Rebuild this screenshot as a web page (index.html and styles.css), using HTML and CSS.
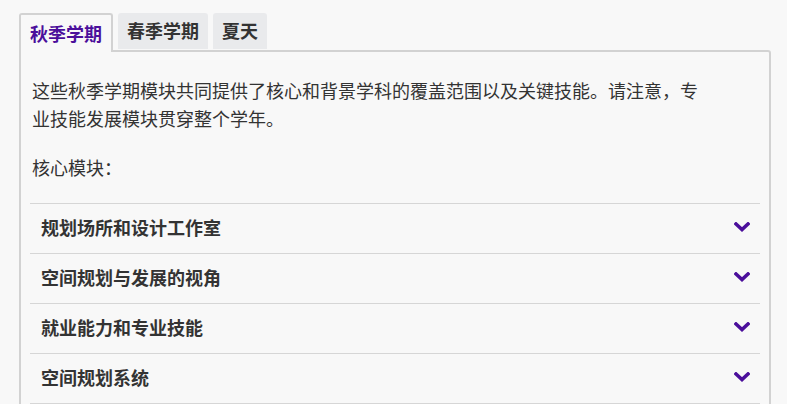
FILE: index.html
```html
<!DOCTYPE html>
<html lang="zh-CN">
<head>
  <meta charset="UTF-8">
  <meta name="viewport" content="width=device-width, initial-scale=1.0">
  <title>学期模块</title>
  <link rel="stylesheet" href="styles.css">
</head>
<body>

  <div class="tabs">
    <button class="tab active">秋季学期</button>
    <button class="tab">春季学期</button>
    <button class="tab">夏天</button>
  </div>

  <div class="panel">
    <p class="intro">这些秋季学期模块共同提供了核心和背景学科的覆盖范围以及关键技能。请注意，专业技能发展模块贯穿整个学年。</p>
    <p class="label">核心模块：</p>

    <div class="accordion">
      <div class="item">
        <span class="title">规划场所和设计工作室</span>
        <svg class="chevron" width="16" height="10" viewBox="0 0 16 10"><path d="M2 2 L8 7.5 L14 2" fill="none" stroke="currentColor" stroke-width="3.6" stroke-linecap="square"/></svg>
      </div>
      <div class="item">
        <span class="title">空间规划与发展的视角</span>
        <svg class="chevron" width="16" height="10" viewBox="0 0 16 10"><path d="M2 2 L8 7.5 L14 2" fill="none" stroke="currentColor" stroke-width="3.6" stroke-linecap="square"/></svg>
      </div>
      <div class="item">
        <span class="title">就业能力和专业技能</span>
        <svg class="chevron" width="16" height="10" viewBox="0 0 16 10"><path d="M2 2 L8 7.5 L14 2" fill="none" stroke="currentColor" stroke-width="3.6" stroke-linecap="square"/></svg>
      </div>
      <div class="item">
        <span class="title">空间规划系统</span>
        <svg class="chevron" width="16" height="10" viewBox="0 0 16 10"><path d="M2 2 L8 7.5 L14 2" fill="none" stroke="currentColor" stroke-width="3.6" stroke-linecap="square"/></svg>
      </div>
    </div>
  </div>

</body>
</html>
```

FILE: styles.css
```css
body {
  font-family: "Noto Sans CJK SC", "Noto Sans", sans-serif;
  background-color: #f8f8f8;
  color: #333;
  margin: 0;
  padding: 13px 16px 0 19px;
}
.tabs {
  display: flex;
  align-items: flex-end;
  gap: 5px;
  position: relative;
  z-index: 1;
}
.tab {
  font-family: inherit;
  font-size: 18px;
  font-weight: bold;
  color: #333;
  background: #e9eaec;
  border: none;
  border-radius: 3px 3px 0 0;
  padding: 0 9px 2px;
  height: 36px;
  margin-bottom: 1px;
  cursor: pointer;
}
.tab.active {
  color: #4b0f9b;
  background: #f8f8f8;
  border: 2px solid #d2d2d2;
  border-bottom: none;
  height: 39px;
  padding: 0 9px 2px;
  margin-bottom: -2px;
}
.panel {
  border: 2px solid #d2d2d2;
  border-radius: 0 3px 0 0;
  padding: 16px 9px 0 9px;
}
.intro {
  font-size: 18px;
  line-height: 28px;
  max-width: 675px;
  margin: 8px 0 21px 2px;
}
.label {
  font-size: 18px;
  line-height: 28px;
  margin: 0 0 22px 2px;
}
.accordion {
  border-bottom: 1px solid #d6d6d6;
}
.item {
  display: flex;
  justify-content: space-between;
  align-items: center;
  height: 46px;
  border-top: 1px solid #d6d6d6;
  padding: 0 10px 3px 11px;
}
.title {
  font-size: 18px;
  font-weight: bold;
  color: #333;
}
.chevron {
  color: #4b0f9b;
}
```
